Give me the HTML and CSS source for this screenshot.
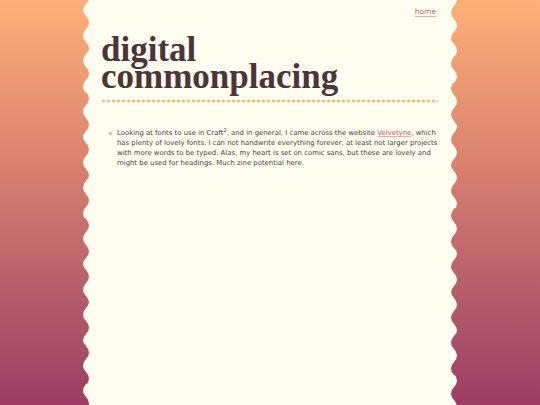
FILE: index.html
```html
<!DOCTYPE html>
<html>
<head>
<meta charset="utf-8">
<link rel="stylesheet" href="styles.css">
</head>
<body>
<div class="page">
  <nav class="nav"><a href="#" class="nav-link">home</a></nav>
  <header class="header">
    <h1 class="title">digital<br>commonplacing</h1>
  </header>
  <ul class="notes">
    <li class="note">Looking at fonts to use in Craft<sup class="fn">2</sup>, and in general, I came across the website <a href="#" class="ext">Velvetyne</a>, which has plenty of lovely fonts. I can not handwrite everything forever, at least not larger projects with more words to be typed. Alas, my heart is set on comic sans, but these are lovely and might be used for headings. Much zine potential here.</li>
  </ul>
</div>
</body>
</html>
```
FILE: styles.css
```css
html, body {
  margin: 0;
  padding: 0;
}
body {
  height: 405px;
  overflow: hidden;
  background: linear-gradient(to bottom, #ffb078 0%, #d9826f 40%, #b25a6a 75%, #9c3c64 100%);
}
.page {
  position: relative;
  width: 360px;
  height: 405px;
  margin: 0 auto;
  background: #fffdf0;
  box-sizing: border-box;
  padding: 0 12px 0 11px;
}
.page::before,
.page::after {
  content: "";
  position: absolute;
  top: 0;
  bottom: 0;
  width: 8px;
  background-repeat: repeat-y;
  background-size: 8px 25.4px;
}
.page::before {
  left: -8px;
  background-image: url("data:image/svg+xml;utf8,<svg xmlns='http://www.w3.org/2000/svg' viewBox='0 0 8 25.4' preserveAspectRatio='none'><path d='M8 0 H4 Q-2 6.35 4 12.7 T4 25.4 H8 Z' fill='%23fffdf0'/></svg>");
  background-position: 0 3.65px;
}
.page::after {
  right: -8px;
  background-image: url("data:image/svg+xml;utf8,<svg xmlns='http://www.w3.org/2000/svg' viewBox='0 0 8 25.4' preserveAspectRatio='none'><path d='M0 0 H4 Q10 6.35 4 12.7 T4 25.4 H0 Z' fill='%23fffdf0'/></svg>");
  background-position: 0 -6.35px;
}
.nav {
  text-align: right;
  padding: 7px 2px 0 0;
  font-family: "DejaVu Sans", sans-serif;
  font-size: 7.5px;
  line-height: 9px;
}
.nav-link {
  color: #b36f7d;
  text-decoration: none;
  border-bottom: 1px solid #f2b48c;
}
.header {
  padding-bottom: 13px;
  background-image: radial-gradient(circle, #f7b77c 1.3px, transparent 1.7px);
  background-size: 5px 4px;
  background-repeat: repeat-x;
  background-position: 0 100%;
}
.title {
  margin: 20px 0 0 0;
  font-family: "Liberation Serif", serif;
  font-weight: bold;
  font-size: 35px;
  line-height: 27px;
  color: #4a3539;
}
.notes {
  margin: 25px 0 0 0;
  padding: 0 0 0 16px;
  list-style: none;
}
.note {
  position: relative;
  font-family: "DejaVu Sans", sans-serif;
  font-size: 6.9px;
  line-height: 10px;
  color: #4b3d3d;
}
.note::before {
  content: "";
  position: absolute;
  left: -8px;
  top: 4px;
  width: 3px;
  height: 3px;
  border-radius: 50%;
  background: #f5a96f;
}
.fn {
  font-size: 5px;
  line-height: 0;
  vertical-align: baseline;
  position: relative;
  top: -3px;
}
.ext {
  color: #b3586b;
  text-decoration: underline;
  text-decoration-color: #f0a8b0;
}
```
